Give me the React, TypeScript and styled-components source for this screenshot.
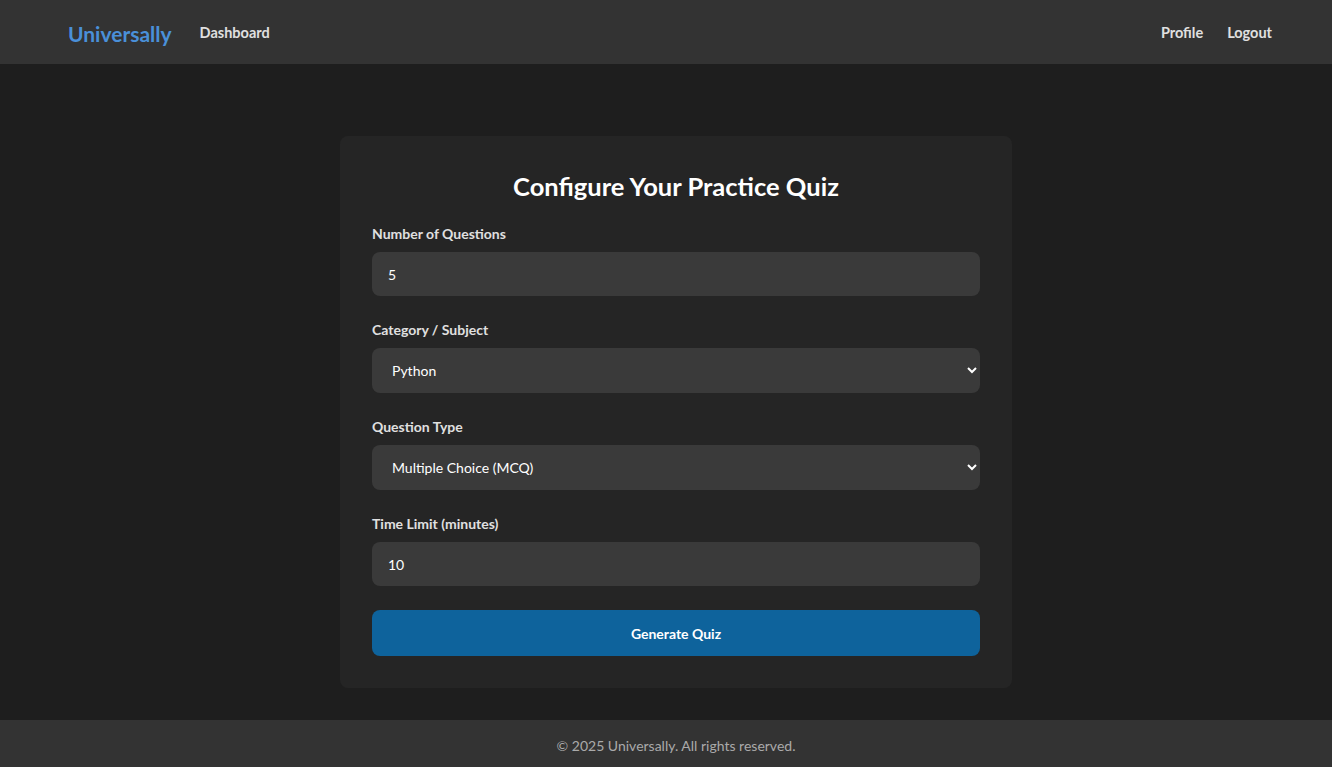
import React from "react";
import styled, { createGlobalStyle } from "styled-components";

const Global = createGlobalStyle`
  html, body { margin: 0; padding: 0; background: #1e1e1e; }
  body { font-family: "Segoe UI", Lato, "Noto Sans", sans-serif; color: #e0e0e0; }
  * { box-sizing: border-box; }
`;

const Page = styled.div`
  min-height: 100vh;
  display: flex;
  flex-direction: column;
  background: #1e1e1e;
`;

const Header = styled.header`
  height: 64px;
  background: #333333;
  display: flex;
  align-items: center;
  justify-content: space-between;
  padding: 0 60px 0 68px;
`;

const NavGroup = styled.nav<{ $gap: number }>`
  display: flex;
  align-items: center;
  gap: ${(p) => p.$gap}px;
`;

const Logo = styled.a`
  font-size: 21px;
  font-weight: 700;
  color: #4a90d9;
  text-decoration: none;
  margin-top: 2px;
`;

const NavLink = styled.a`
  font-size: 14.5px;
  font-weight: 700;
  color: #e0e0e0;
  text-decoration: none;
`;

const Main = styled.main`
  flex: 1;
  display: flex;
  justify-content: center;
  align-items: flex-start;
  padding: 72px 0 32px 20px;
`;

const Card = styled.div`
  width: 672px;
  background: #252525;
  border-radius: 8px;
  padding: 32px;
`;

const Title = styled.h2`
  margin: 0 0 20px;
  text-align: center;
  font-size: 25.5px;
  line-height: 36px;
  font-weight: 700;
  color: #ffffff;
`;

const Field = styled.div`
  display: flex;
  flex-direction: column;
  gap: 8px;
  margin-bottom: 24px;
`;

const Label = styled.label`
  font-size: 14px;
  line-height: 20px;
  font-weight: 700;
  color: #e0e0e0;
`;

const Input = styled.input`
  height: 44px;
  border: none;
  outline: none;
  border-radius: 8px;
  background: #3a3a3a;
  color: #ffffff;
  font-family: inherit;
  font-size: 14px;
  padding: 0 16px;
`;

const Select = styled.select`
  height: 45px;
  border: none;
  outline: none;
  border-radius: 8px;
  background: #3a3a3a;
  color: #ffffff;
  font-family: inherit;
  font-size: 14px;
  padding: 0 12px 0 16px;
  color-scheme: dark;
`;

const Button = styled.button`
  width: 100%;
  height: 46px;
  border: none;
  border-radius: 8px;
  background: #0e639c;
  color: #ffffff;
  font-family: inherit;
  font-size: 14px;
  font-weight: 700;
  cursor: pointer;
`;

const Footer = styled.footer`
  height: 47px;
  background: #333333;
  display: flex;
  align-items: center;
  justify-content: center;
  font-size: 14px;
  color: #aaaaaa;
  padding-top: 4px;
  padding-left: 20px;
`;

export default function App() {
  return (
    <Page>
      <Global />
      <Header>
        <NavGroup $gap={28}>
          <Logo href="#">Universally</Logo>
          <NavLink href="#">Dashboard</NavLink>
        </NavGroup>
        <NavGroup $gap={24}>
          <NavLink href="#">Profile</NavLink>
          <NavLink href="#">Logout</NavLink>
        </NavGroup>
      </Header>
      <Main>
        <Card>
          <Title>Configure Your Practice Quiz</Title>
          <Field>
            <Label>Number of Questions</Label>
            <Input type="number" defaultValue={5} />
          </Field>
          <Field>
            <Label>Category / Subject</Label>
            <Select defaultValue="python">
              <option value="python">Python</option>
              <option value="js">JavaScript</option>
            </Select>
          </Field>
          <Field>
            <Label>Question Type</Label>
            <Select defaultValue="mcq">
              <option value="mcq">Multiple Choice (MCQ)</option>
              <option value="tf">True / False</option>
            </Select>
          </Field>
          <Field>
            <Label>Time Limit (minutes)</Label>
            <Input type="number" defaultValue={10} />
          </Field>
          <Button>Generate Quiz</Button>
        </Card>
      </Main>
      <Footer>© 2025 Universally. All rights reserved.</Footer>
    </Page>
  );
}
